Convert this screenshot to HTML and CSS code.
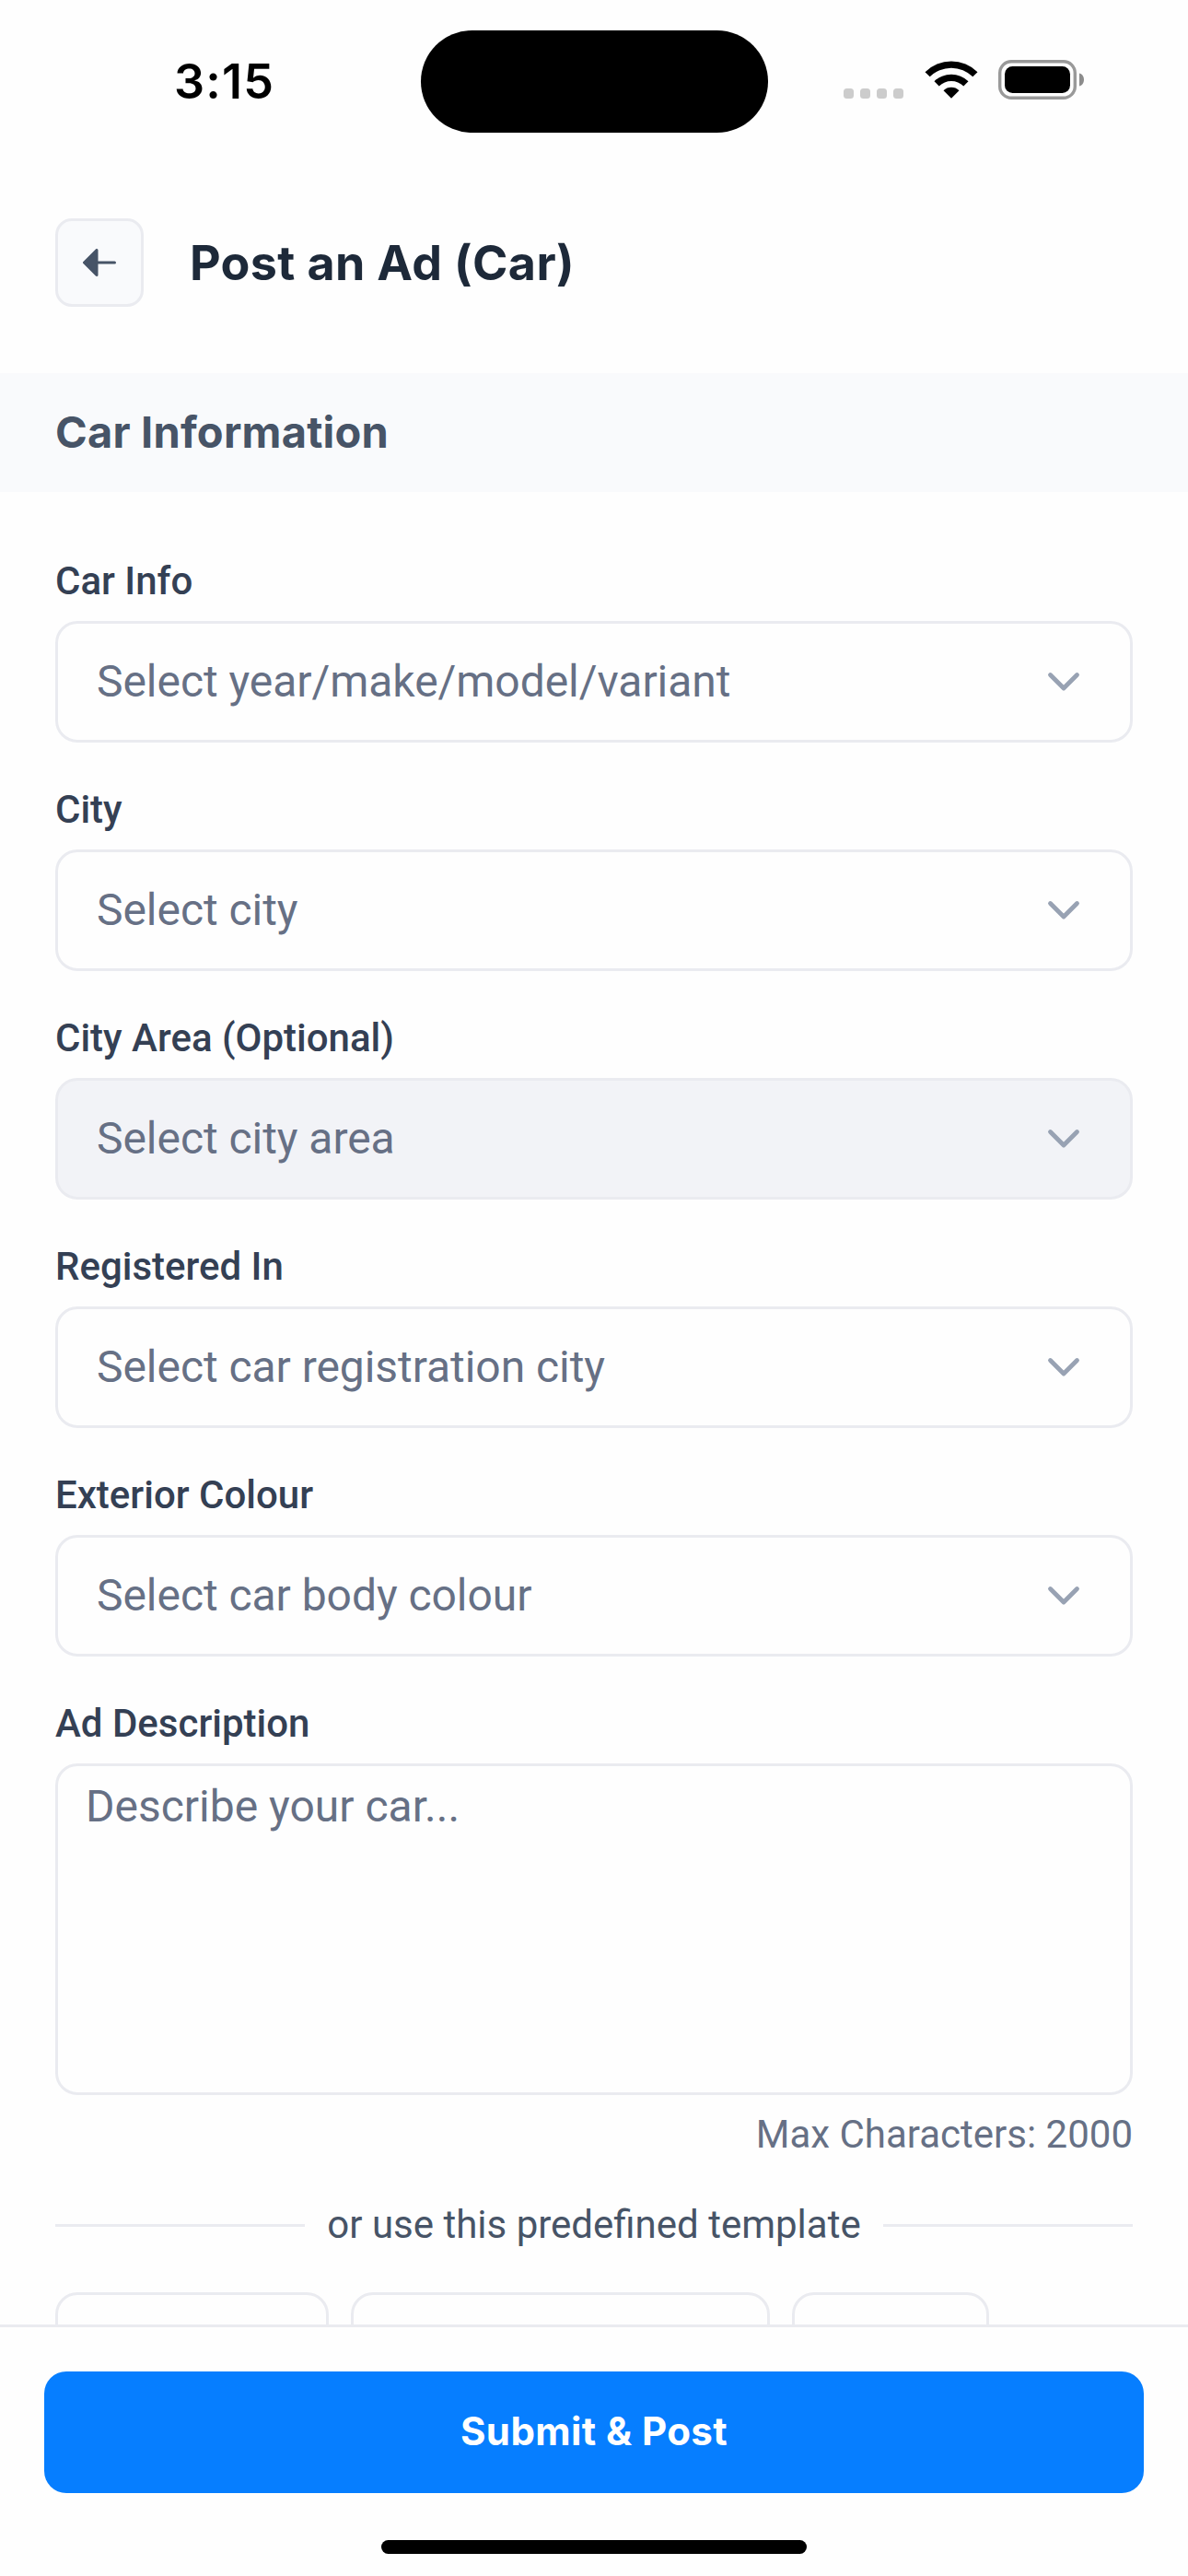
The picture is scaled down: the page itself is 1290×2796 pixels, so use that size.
FILE: index.html
```html
<!DOCTYPE html>
<html lang="en">
<head>
<meta charset="utf-8">
<title>Post an Ad (Car)</title>
<link rel="stylesheet" href="styles.css">
</head>
<body>
<div class="screen">
  <div class="status">
    <div class="time">3:15</div>
    <div class="island"></div>
    <div class="indicators">
      <div class="signal"><i></i><i></i><i></i><i></i></div>
      <svg class="wifi" width="58" height="42" viewBox="0 0 58 42">
        <path d="M0.5 13.2A40.5 40.5 0 0 1 57.500 13.2L52.300 18.300A33 33 0 0 0 5.700 18.300Z"/>
        <path d="M10.500 23.200A26.500 26.500 0 0 1 47.500 23.200L42.300 28.400A19 19 0 0 0 15.700 28.400Z"/>
        <path d="M20.500 33.200A12.500 12.500 0 0 1 37.500 33.200L29 41.800Z"/>
      </svg>
      <svg class="battery" width="94" height="43" viewBox="0 0 94 43">
        <rect x="1.700" y="1.700" width="81.600" height="39.600" rx="12.500" fill="none" stroke="#999" stroke-width="3.400"/>
        <rect x="7" y="7" width="71" height="29" rx="8.500"/>
        <path d="M88 14.500C91.500 15.500 93 18.500 93 21.500S91.500 27.500 88 28.500Z" fill="#8c8c8c"/>
      </svg>
    </div>
  </div>
  <header class="header">
    <button class="back" aria-label="Back">
      <svg width="36" height="30" viewBox="0 0 36 30">
        <path d="M15 1.500V28.500L1.500 15Z" fill="#475467" stroke="#475467" stroke-width="3" stroke-linejoin="round"/>
        <path d="M15 15H34.500" stroke="#475467" stroke-width="3" stroke-linecap="round"/>
      </svg>
    </button>
    <h1 class="title">Post an Ad (Car)</h1>
  </header>
  <h2 class="section">Car Information</h2>
  <main class="form">
    <div class="field">
      <div class="label">Car Info</div>
      <div class="select"><span>Select year/make/model/variant</span><svg class="chevron" viewBox="0 0 36 22"><path d="M3.500 3.500L18 18L32.500 3.500"/></svg></div>
    </div>
    <div class="field">
      <div class="label">City</div>
      <div class="select"><span>Select city</span><svg class="chevron" viewBox="0 0 36 22"><path d="M3.500 3.500L18 18L32.500 3.500"/></svg></div>
    </div>
    <div class="field">
      <div class="label">City Area (Optional)</div>
      <div class="select disabled"><span>Select city area</span><svg class="chevron" viewBox="0 0 36 22"><path d="M3.500 3.500L18 18L32.500 3.500"/></svg></div>
    </div>
    <div class="field">
      <div class="label">Registered In</div>
      <div class="select"><span>Select car registration city</span><svg class="chevron" viewBox="0 0 36 22"><path d="M3.500 3.500L18 18L32.500 3.500"/></svg></div>
    </div>
    <div class="field">
      <div class="label">Exterior Colour</div>
      <div class="select"><span>Select car body colour</span><svg class="chevron" viewBox="0 0 36 22"><path d="M3.500 3.500L18 18L32.500 3.500"/></svg></div>
    </div>
    <div class="field">
      <div class="label">Ad Description</div>
      <div class="textarea">Describe your car...</div>
    </div>
    <div class="hint">Max Characters: 2000</div>
    <div class="divider"><span>or use this predefined template</span></div>
    <div class="chips">
      <div class="chip chip-a"></div>
      <div class="chip chip-b"></div>
      <div class="chip chip-c"></div>
    </div>
  </main>
  <footer class="footer">
    <button class="submit">Submit &amp; Post</button>
    <div class="home"></div>
  </footer>
</div>
</body>
</html>
```
FILE: styles.css
```css
* { box-sizing: border-box; }
body { margin: 0; background: #fefefe; font-family: Roboto, sans-serif; }
button { padding: 0; font: inherit; }

.screen {
  width: 1290px;
  height: 2796px;
  overflow: hidden;
  display: flex;
  flex-direction: column;
  background: #fefefe;
}

/* Status bar */
.status {
  height: 177px;
  flex: none;
  display: grid;
  grid-template-columns: 457px 377px 1fr;
  align-items: start;
  padding-top: 33px;
}
.time {
  padding-left: 189px;
  font: 600 52px/111px Inter, sans-serif;
  letter-spacing: 1.2px;
  color: #000;
}
.island { height: 111px; border-radius: 56px; background: #000; }
.indicators { display: flex; padding: 32px 0 0 82px; }
.signal { display: flex; gap: 7px; padding-top: 31px; }
.signal i { width: 11px; height: 11px; border-radius: 3.500px; background: #ccc; }
.wifi { margin-left: 22.500px; }
.battery { margin-left: 22.500px; }

/* Header */
.header {
  height: 228px;
  flex: none;
  display: flex;
  align-items: flex-start;
  gap: 50px;
  padding: 60px 60px 0;
}
.back {
  width: 96px;
  height: 96px;
  display: flex;
  align-items: center;
  justify-content: center;
  padding-right: 1px;
  border: 3px solid #eaebf0;
  border-radius: 18px;
  background: #f9fafc;
}
.title {
  margin: 0;
  font: 700 52px/97px Inter, sans-serif;
  letter-spacing: 0.35px;
  color: #1d2939;
}

.section {
  height: 129px;
  flex: none;
  margin: 0;
  padding-left: 60px;
  background: #f9fafc;
  font: 700 47px/127px Inter, sans-serif;
  letter-spacing: 0.2px;
  color: #475467;
}

/* Form */
.form { flex: 1; min-height: 0; overflow: hidden; padding: 68px 60px 0; }
.field + .field { margin-top: 44px; }
.label {
  height: 60px;
  margin-bottom: 12px;
  font-size: 42px;
  font-weight: 500;
  line-height: 58px;
  color: #344054;
}
.select {
  height: 132px;
  display: flex;
  align-items: center;
  justify-content: space-between;
  padding: 0 54px 0 42px;
  border: 3px solid #eaebf0;
  border-radius: 24px;
  font-size: 48px;
  letter-spacing: -0.05px;
  color: #667085;
}
.select span { padding-bottom: 2px; }
.disabled { background: #f2f3f7; }
.chevron {
  width: 36px;
  height: 22px;
  fill: none;
  stroke: #98a2b3;
  stroke-width: 4.800;
  stroke-linecap: round;
  stroke-linejoin: round;
}
.textarea {
  height: 360px;
  padding: 15px 30px;
  border: 3px solid #eaebf0;
  border-radius: 24px;
  font-size: 48px;
  line-height: 58px;
  color: #667085;
}
.hint {
  margin-top: 13px;
  text-align: right;
  font-size: 42px;
  line-height: 60px;
  color: #667085;
}
.divider {
  display: flex;
  align-items: center;
  gap: 24px;
  margin-top: 38px;
  height: 60px;
  font-size: 42px;
  line-height: 60px;
  color: #475467;
}
.divider::before, .divider::after { content: ""; flex: 1; height: 3px; background: #eaebf0; }
.chips { display: flex; gap: 24px; margin-top: 43px; }
.chip { height: 108px; border: 3px solid #eaebf0; border-radius: 24px; }
.chip-a { width: 297px; }
.chip-b { width: 455px; }
.chip-c { width: 214px; }

/* Footer */
.footer {
  height: 273px;
  flex: none;
  padding: 48px 48px 0;
  border-top: 3px solid #eaebf0;
}
.submit {
  display: block;
  width: 100%;
  height: 132px;
  border: 0;
  border-radius: 24px;
  background: #067eff;
  color: #fff;
  font: 700 42px/130px Inter, sans-serif;
  letter-spacing: 0.4px;
  padding-bottom: 2px;
}
.home { width: 462px; height: 15px; margin: 51px auto 0; border-radius: 8px; background: #000; }
```
